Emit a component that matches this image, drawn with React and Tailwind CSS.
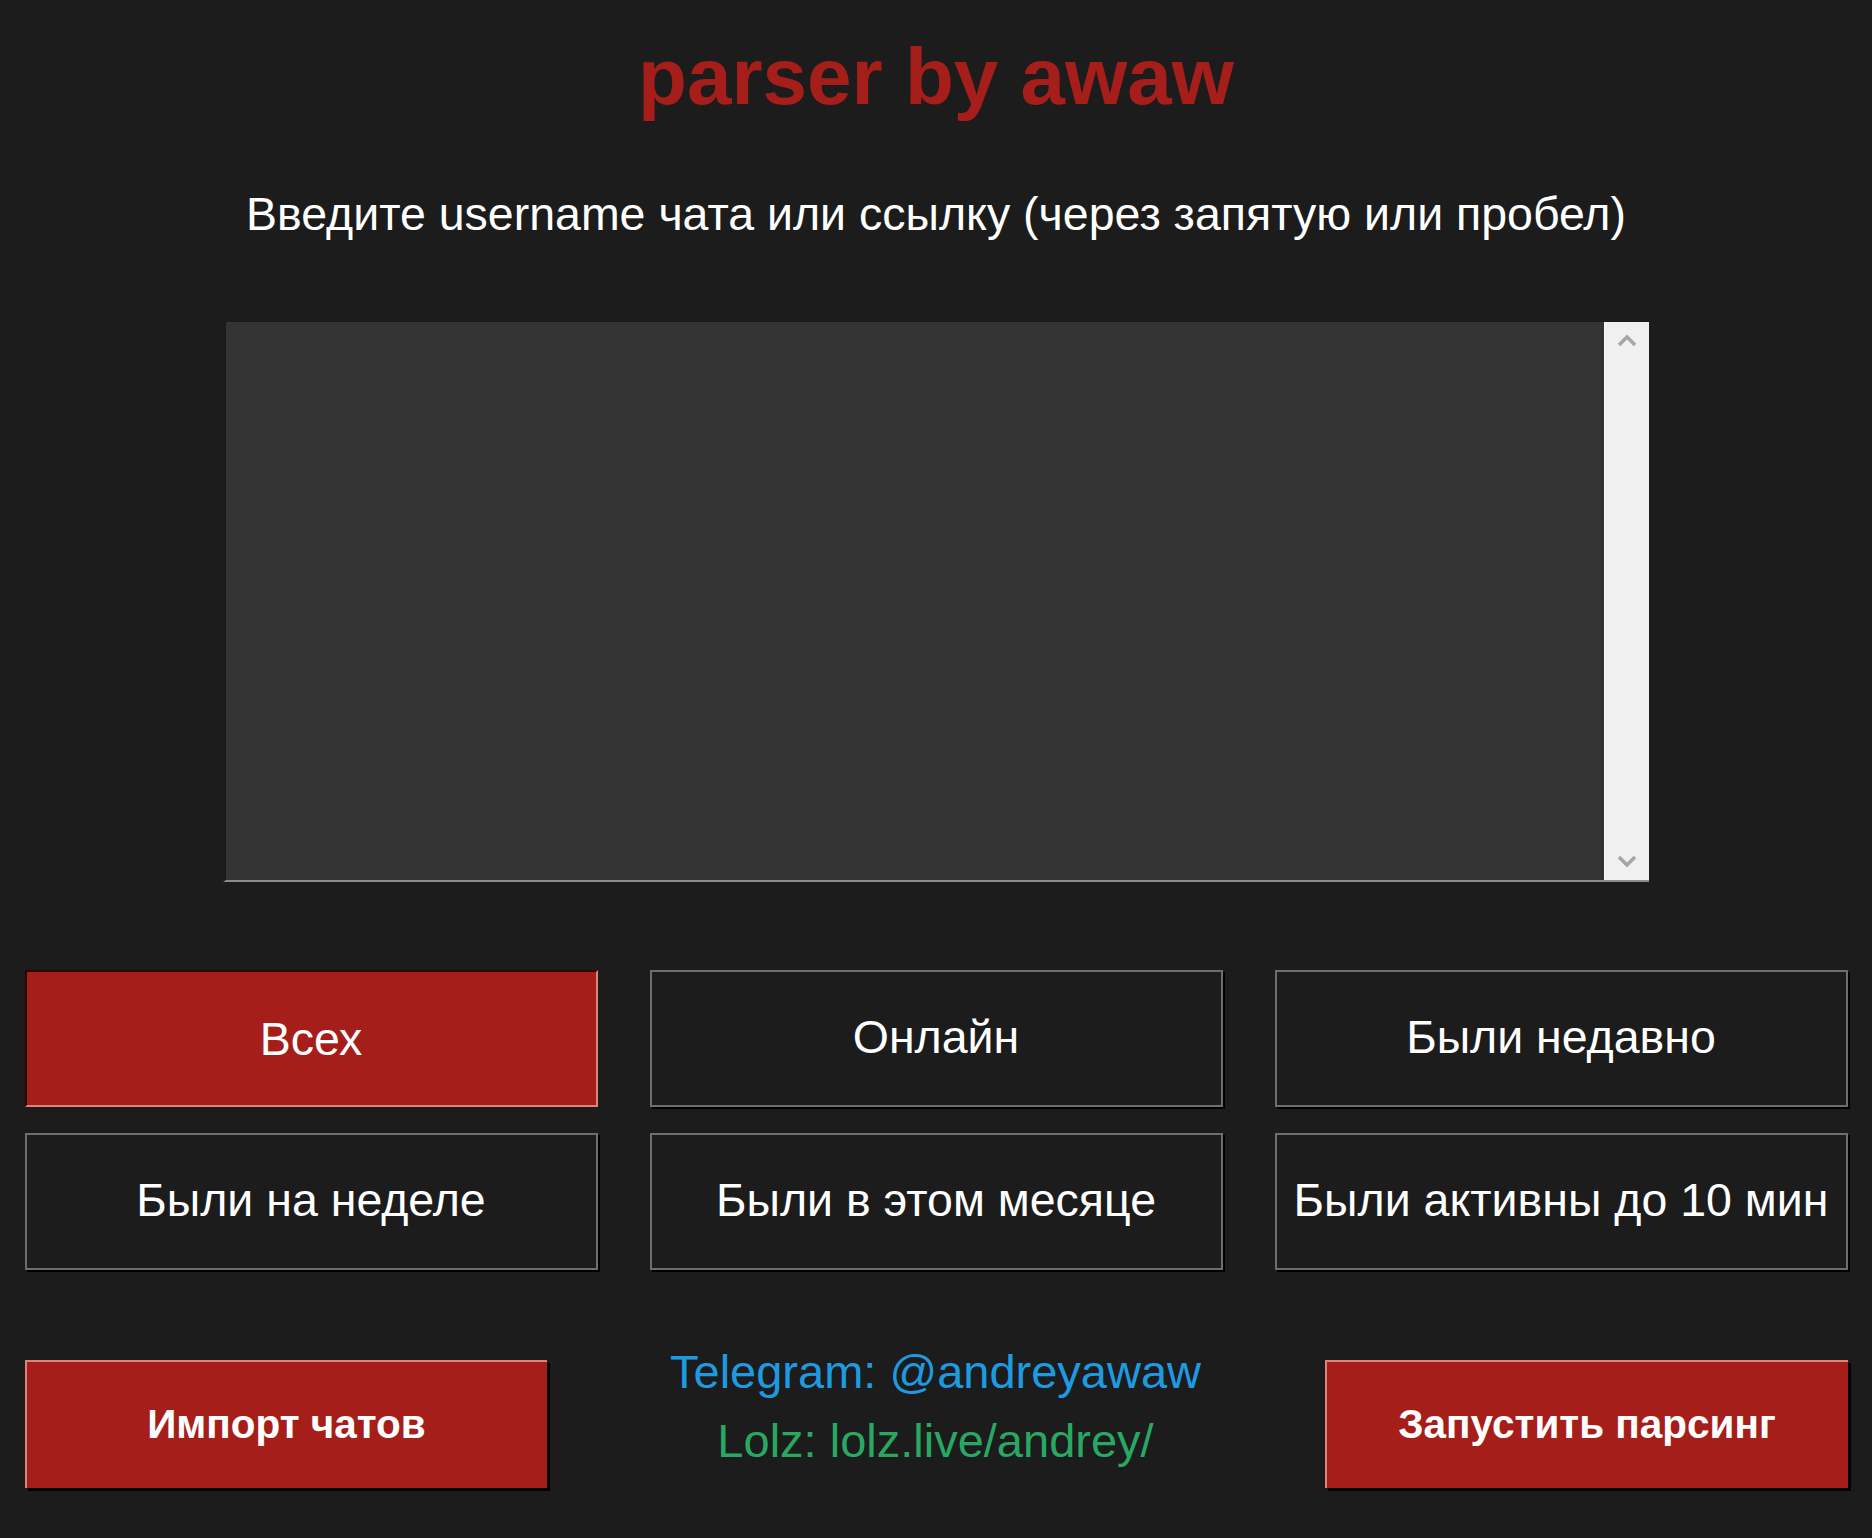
export default function App() {
  const dark = "flex items-center justify-center bg-[#1c1c1c] border-2 border-[#6e6e6e] shadow-[2px_2px_0_#000] text-white text-[46.5px] h-[137px]";
  return (
    <div className="w-[1872px] h-[1538px] bg-[#1c1c1c] flex flex-col items-center font-['Liberation_Sans',Arial,sans-serif] overflow-hidden">
      <div className="mt-[37px] text-[80px] leading-none font-bold text-[#a61e1a]">parser by awaw</div>
      <div className="mt-[74px] text-[46.5px] leading-none text-white">Введите username чата или ссылку (через запятую или пробел)</div>
      <div className="mt-[84px] w-[1426px] h-[560px] flex bg-[#333333] border-l-[3px] border-l-[#1a1a1a] border-b-2 border-b-[#8c8c8c]">
        <div className="flex-1" />
        <div className="w-[45px] bg-[#f0f0f0] border-l border-l-[#fafafa] flex flex-col items-center justify-between py-[12px]">
          <svg width="22" height="14" viewBox="0 0 22 14"><path d="M3 11 L11 3 L19 11" fill="none" stroke="#a6a6a6" strokeWidth="3.5" /></svg>
          <svg width="22" height="14" viewBox="0 0 22 14"><path d="M3 3 L11 11 L19 3" fill="none" stroke="#a6a6a6" strokeWidth="3.5" /></svg>
        </div>
      </div>
      <div className="mt-[88px] w-[1823px] grid grid-cols-3 gap-x-[52px] gap-y-[26px]">
        <div className="flex items-center justify-center bg-[#a61e1a] border-2 border-t-[#2a0504] border-l-[#2a0504] border-b-[#e0827c] border-r-[#e0827c] text-white text-[46.5px] h-[137px] pt-[4px]">Всех</div>
        <div className={dark}>Онлайн</div>
        <div className={dark}>Были недавно</div>
        <div className={dark}>Были на неделе</div>
        <div className={dark}>Были в этом месяце</div>
        <div className={dark}>Были активны до 10 мин</div>
      </div>
      <div className="mt-[90px] w-[1823px] flex items-center justify-between">
        <div className="w-[522px] h-[128px] flex items-center justify-center bg-[#a61e1a] border-t-2 border-l-2 border-t-[#e0827c] border-l-[#e0827c] shadow-[3px_3px_0_#000] text-white font-bold text-[40.5px]">Импорт чатов</div>
        <div className="flex flex-col items-center text-[47px] leading-[69px] -mt-[36px]">
          <div className="text-[#1e9be0]">Telegram: @andreyawaw</div>
          <div className="text-[#28a862]">Lolz: lolz.live/andrey/</div>
        </div>
        <div className="w-[523px] h-[128px] flex items-center justify-center bg-[#a61e1a] border-t-2 border-l-2 border-t-[#e0827c] border-l-[#e0827c] shadow-[3px_3px_0_#000] text-white font-bold text-[40.5px]">Запустить парсинг</div>
      </div>
    </div>
  );
}
